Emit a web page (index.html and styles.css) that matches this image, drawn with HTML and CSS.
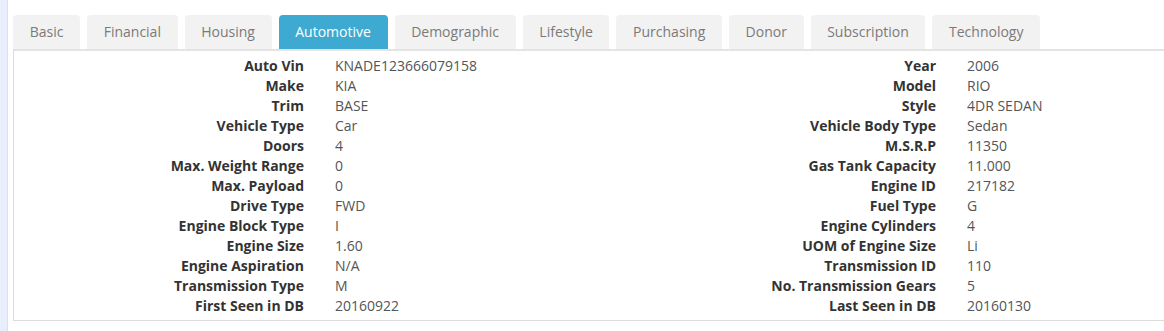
FILE: index.html
```html
<!DOCTYPE html>
<html>
<head>
<meta charset="utf-8">
<link rel="stylesheet" href="styles.css">
</head>
<body>
<div class="layout">
  <div class="sidebar"></div>
  <div class="main">
    <ul class="tabs">
      <li class="tab">Basic</li>
      <li class="tab">Financial</li>
      <li class="tab">Housing</li>
      <li class="tab active">Automotive</li>
      <li class="tab">Demographic</li>
      <li class="tab">Lifestyle</li>
      <li class="tab">Purchasing</li>
      <li class="tab">Donor</li>
      <li class="tab">Subscription</li>
      <li class="tab">Technology</li>
    </ul>
    <div class="panel">
      <div class="grid">
        <div class="lbl">Auto Vin</div><div class="val">KNADE123666079158</div><div class="lbl">Year</div><div class="val">2006</div>
        <div class="lbl">Make</div><div class="val">KIA</div><div class="lbl">Model</div><div class="val">RIO</div>
        <div class="lbl">Trim</div><div class="val">BASE</div><div class="lbl">Style</div><div class="val">4DR SEDAN</div>
        <div class="lbl">Vehicle Type</div><div class="val">Car</div><div class="lbl">Vehicle Body Type</div><div class="val">Sedan</div>
        <div class="lbl">Doors</div><div class="val">4</div><div class="lbl">M.S.R.P</div><div class="val">11350</div>
        <div class="lbl">Max. Weight Range</div><div class="val">0</div><div class="lbl">Gas Tank Capacity</div><div class="val">11.000</div>
        <div class="lbl">Max. Payload</div><div class="val">0</div><div class="lbl">Engine ID</div><div class="val">217182</div>
        <div class="lbl">Drive Type</div><div class="val">FWD</div><div class="lbl">Fuel Type</div><div class="val">G</div>
        <div class="lbl">Engine Block Type</div><div class="val">I</div><div class="lbl">Engine Cylinders</div><div class="val">4</div>
        <div class="lbl">Engine Size</div><div class="val">1.60</div><div class="lbl">UOM of Engine Size</div><div class="val">Li</div>
        <div class="lbl">Engine Aspiration</div><div class="val">N/A</div><div class="lbl">Transmission ID</div><div class="val">110</div>
        <div class="lbl">Transmission Type</div><div class="val">M</div><div class="lbl">No. Transmission Gears</div><div class="val">5</div>
        <div class="lbl">First Seen in DB</div><div class="val">20160922</div><div class="lbl">Last Seen in DB</div><div class="val">20160130</div>
      </div>
    </div>
  </div>
</div>
</body>
</html>
```

FILE: styles.css
```css
html, body {
  margin: 0;
  padding: 0;
  background: #fff;
  overflow: hidden;
}
body {
  font-family: "Open Sans", "Liberation Sans", sans-serif;
  font-size: 14px;
  color: #333;
}
.layout {
  display: flex;
  height: 331px;
}
.sidebar {
  width: 7px;
  flex: none;
  background: #e8eefb;
  border-right: 1px solid #dbe2ef;
}
.main {
  flex: 1;
  padding: 15px 0 0 5px;
  min-width: 0;
}
.tabs {
  list-style: none;
  margin: 0;
  padding: 0;
  display: flex;
  gap: 7px;
}
.tab {
  height: 34px;
  line-height: 33px;
  padding: 0 16.65px;
  background: #f2f2f2;
  color: #7a7a7a;
  border-radius: 4px 4px 0 0;
  white-space: nowrap;
}
.tab.active {
  background: #3eaad1;
  color: #fff;
}
.panel {
  border-top: 2px solid #e4e4e4;
  border-left: 1px solid #dcdcdc;
  border-bottom: 1px solid #dcdcdc;
  padding: 5px 0 4px;
  margin-right: -20px;
}
.grid {
  display: grid;
  grid-template-columns: 306px 316px 316px 1fr;
  grid-auto-rows: 20px;
  line-height: 20px;
}
.lbl {
  text-align: right;
  font-weight: bold;
  color: #333;
  padding-right: 16px;
  white-space: nowrap;
}
.val {
  padding-left: 15px;
  color: #555;
  white-space: nowrap;
}
```
